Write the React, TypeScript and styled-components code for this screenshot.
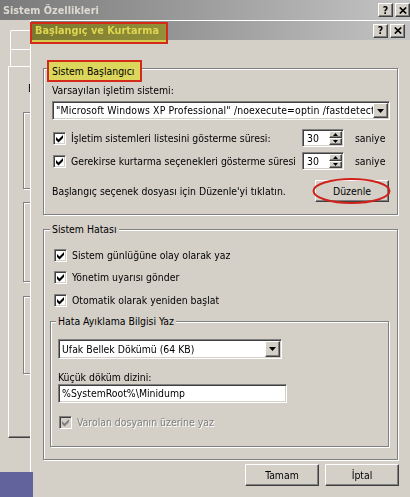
import React from 'react';
import styled, { createGlobalStyle, css } from 'styled-components';

const FONT = `"DejaVu Sans Condensed", "DejaVu Sans", "Liberation Sans", sans-serif`;

const GlobalStyle = createGlobalStyle`
  * { box-sizing: border-box; }
  html, body { margin: 0; padding: 0; }
  body {
    width: 410px;
    height: 497px;
    overflow: hidden;
    background: #62629c;
    font-family: ${FONT};
    font-size: 10.4px;
    line-height: 13px;
    color: #000;
  }
`;

const sunken = css`
  border: 1px solid;
  border-color: #808080 #ffffff #ffffff #808080;
  box-shadow: inset 1px 1px 0 #404040, inset -1px -1px 0 #d4d0c8;
`;

const raised = css`
  background: #d4d0c8;
  border: 1px solid;
  border-color: #ffffff #404040 #404040 #ffffff;
  box-shadow: inset -1px -1px 0 #808080;
`;

const Screen = styled.div`
  position: relative;
  width: 410px;
  height: 497px;
  overflow: hidden;
`;

const Window = styled.div<{ $left: number; $top: number; $width: number; $height: number; $framed?: boolean }>`
  position: absolute;
  left: ${p => p.$left}px;
  top: ${p => p.$top}px;
  width: ${p => p.$width}px;
  height: ${p => p.$height}px;
  background: #d4d0c8;
  display: flex;
  flex-direction: column;
  ${p => p.$framed && css`
    border-left: 1px solid #ffffff;
    border-top: 1px solid #ffffff;
  `}
`;

const TitleBar = styled.div<{ $h: number; $pl: number; $pr: number }>`
  flex: none;
  height: ${p => p.$h}px;
  display: flex;
  align-items: center;
  justify-content: space-between;
  padding: 0 ${p => p.$pr}px 0 ${p => p.$pl}px;
  background: linear-gradient(90deg, #7a7a7a 0%, #9a9a9a 45%, #c4c4c4 100%);
`;

const TitleText = styled.span`
  font-weight: bold;
  color: #dedad2;
  font-size: 10.8px;
  white-space: nowrap;
`;

const CaptionButtons = styled.div`
  display: flex;
  gap: 2px;
`;

const CaptionButton = styled.div`
  ${raised};
  width: 15px;
  height: 14px;
  display: flex;
  align-items: center;
  justify-content: center;
  font-weight: bold;
  font-size: 10.5px;
  line-height: 1;
  color: #000;
`;

const DesktopPatch = styled.div`
  position: absolute;
  left: 0;
  top: 472px;
  width: 33px;
  height: 25px;
  background: #62629c;
  z-index: 3;
`;

/* ---------- back window (Sistem Özellikleri) ---------- */

const BackBody = styled.div`
  flex: 1;
  display: flex;
  flex-direction: column;
  padding: 10px 0 0 8px;
`;

const TabRow = styled.div<{ $h: number }>`
  display: flex;
  height: ${p => p.$h}px;
  padding-left: 2px;
`;

const Tab = styled.div<{ $w: number }>`
  width: ${p => p.$w}px;
  border-left: 1px solid #ffffff;
  border-top: 1px solid #ffffff;
  border-right: 1px solid #404040;
  box-shadow: inset -1px 0 0 #808080;
  border-radius: 2px 2px 0 0;
`;

const TabPanel = styled.div`
  width: 396px;
  height: 372px;
  border: 1px solid;
  border-color: #ffffff #404040 #404040 #ffffff;
  box-shadow: inset -1px -1px 0 #808080;
  padding: 15px 0 0 14px;
  display: flex;
  flex-direction: column;
`;

const BackNote = styled.div`
  margin-left: 5px;
  white-space: nowrap;
`;

/* ---------- shared controls ---------- */

const Group = styled.div<{ $pad: string; $mt?: number; $h?: number; $w?: number; $stretch?: boolean }>`
  position: relative;
  flex: none;
  margin-top: ${p => p.$mt ?? 0}px;
  ${p => p.$h && css`height: ${p.$h}px;`}
  ${p => p.$w && css`width: ${p.$w}px;`}
  ${p => p.$stretch && css`align-self: stretch;`}
  padding: ${p => p.$pad};
  border: 1px solid #808080;
  box-shadow: 1px 1px 0 #ffffff, inset 1px 1px 0 #ffffff;
  display: flex;
  flex-direction: column;
  align-items: flex-start;
`;

const Legend = styled.span<{ $left: number }>`
  position: absolute;
  top: -7px;
  left: ${p => p.$left}px;
  padding: 0 2px;
  background: #d4d0c8;
  white-space: nowrap;
`;

const MarkedLegend = styled.span`
  position: absolute;
  top: -9px;
  left: 3px;
  width: 95px;
  height: 22px;
  padding-left: 3px;
  display: flex;
  align-items: center;
  background: #dcd65c;
  border: 2px solid #d42a1a;
  white-space: nowrap;
`;

const TitleHighlight = styled.div`
  position: absolute;
  left: -1px;
  top: 1px;
  width: 138px;
  height: 22px;
  border: 2px solid #d42a1a;
  pointer-events: none;
`;

const HighlightFill = styled.div`
  width: 100%;
  height: 100%;
  background: #fffa62;
  mix-blend-mode: multiply;
`;

const FieldLabel = styled.div<{ $mt?: number }>`
  margin-top: ${p => p.$mt ?? 0}px;
  white-space: nowrap;
`;

const Combo = styled.div<{ $w: number; $h: number; $mt?: number }>`
  ${sunken};
  width: ${p => p.$w}px;
  height: ${p => p.$h}px;
  margin-top: ${p => p.$mt ?? 0}px;
  background: #ffffff;
  display: flex;
  align-items: center;
  padding: 1px 1px 1px 3px;
`;

const ComboText = styled.span<{ $spacing?: number }>`
  flex: 1;
  min-width: 0;
  overflow: hidden;
  white-space: nowrap;
  letter-spacing: ${p => p.$spacing ?? 0}px;
`;

const ComboButton = styled.span`
  ${raised};
  flex: none;
  width: 15px;
  height: 100%;
  display: flex;
  align-items: center;
  justify-content: center;
`;

const TextField = styled.div<{ $w: number; $h: number }>`
  ${sunken};
  width: ${p => p.$w}px;
  height: ${p => p.$h}px;
  background: #ffffff;
  display: flex;
  align-items: center;
  padding-left: 3px;
  white-space: nowrap;
`;

const OptionRow = styled.div<{ $mt: number }>`
  align-self: stretch;
  margin-top: ${p => p.$mt}px;
  height: 18px;
  display: flex;
  align-items: center;
`;

const CheckLine = styled.div<{ $mt?: number; $disabled?: boolean; $grow?: boolean }>`
  display: flex;
  align-items: center;
  gap: 5px;
  height: 14px;
  margin-top: ${p => p.$mt ?? 0}px;
  padding-left: 1px;
  white-space: nowrap;
  ${p => p.$grow && css`flex: 1; min-width: 0;`}
  ${p => p.$disabled && css`
    color: #808080;
    text-shadow: 1px 1px 0 #ffffff;
  `}
`;

const CheckBox = styled.span<{ $disabled?: boolean }>`
  ${sunken};
  flex: none;
  width: 13px;
  height: 13px;
  padding: 1px;
  background: ${p => (p.$disabled ? '#d4d0c8' : '#ffffff')};
  display: flex;
`;

const CheckList = styled.div`
  display: flex;
  flex-direction: column;
  gap: 8.5px;
  padding-left: 3px;
`;

const Spin = styled.div`
  ${sunken};
  flex: none;
  width: 42px;
  height: 18px;
  padding: 1px;
  background: #ffffff;
  display: flex;
`;

const SpinValue = styled.span`
  flex: 1;
  padding-left: 3px;
  display: flex;
  align-items: center;
`;

const SpinButtons = styled.div`
  width: 13px;
  display: flex;
  flex-direction: column;
`;

const SpinButton = styled.span`
  ${raised};
  flex: 1;
  display: flex;
  align-items: center;
  justify-content: center;
`;

const Unit = styled.span`
  flex: none;
  width: 35px;
  margin-left: 11px;
  white-space: nowrap;
`;

const EditRow = styled.div`
  align-self: stretch;
  margin-top: 10px;
  height: 22px;
  display: flex;
  align-items: center;
  justify-content: space-between;
  white-space: nowrap;
`;

const ButtonWrap = styled.div`
  position: relative;
  margin-right: 1px;
`;

const PushButton = styled.button<{ $w: number }>`
  ${raised};
  width: ${p => p.$w}px;
  height: 22px;
  padding: 0;
  font-family: ${FONT};
  font-size: 10.4px;
  color: #000;
  display: block;
`;

const CircleMark = styled.svg`
  position: absolute;
  left: -4px;
  top: -3px;
  pointer-events: none;
  overflow: visible;
`;

const DialogBody = styled.div`
  flex: 1;
  display: flex;
  flex-direction: column;
  padding: 28px 12px 0;
`;

const ButtonBar = styled.div`
  display: flex;
  justify-content: flex-end;
  gap: 6px;
  margin-top: 4px;
  margin-right: -1px;
`;

/* ---------- small drawings ---------- */

const Check = ({ disabled }: { disabled?: boolean }) => (
  <CheckBox $disabled={disabled}>
    <svg width="9" height="9" viewBox="0 0 9 9">
      <path d="M1 3 L3.5 5.5 L8 1 L8 4 L3.5 8.5 L1 6 Z" fill={disabled ? '#808080' : '#000'} />
    </svg>
  </CheckBox>
);

const DownArrow = () => (
  <svg width="7" height="4" viewBox="0 0 7 4">
    <path d="M0 0 H7 L3.5 4 Z" fill="#000" />
  </svg>
);

const SmallArrow = ({ up }: { up?: boolean }) => (
  <svg width="5" height="3" viewBox="0 0 5 3">
    <path d={up ? 'M0 3 H5 L2.5 0 Z' : 'M0 0 H5 L2.5 3 Z'} fill="#000" />
  </svg>
);

const CloseGlyph = () => (
  <svg width="8" height="7" viewBox="0 0 8 7">
    <path d="M0.8 0.5 L7.2 6.5 M7.2 0.5 L0.8 6.5" stroke="#000" strokeWidth="1.7" />
  </svg>
);

const Captions = () => (
  <CaptionButtons>
    <CaptionButton>?</CaptionButton>
    <CaptionButton>
      <CloseGlyph />
    </CaptionButton>
  </CaptionButtons>
);

const SpinBox = ({ value }: { value: string }) => (
  <Spin>
    <SpinValue>{value}</SpinValue>
    <SpinButtons>
      <SpinButton>
        <SmallArrow up />
      </SpinButton>
      <SpinButton>
        <SmallArrow />
      </SpinButton>
    </SpinButtons>
  </Spin>
);

export default function App() {
  return (
    <Screen>
      <GlobalStyle />

      <Window $left={0} $top={0} $width={410} $height={472}>
        <TitleBar $h={20} $pl={3} $pr={0}>
          <TitleText>Sistem Özellikleri</TitleText>
          <Captions />
        </TitleBar>
        <BackBody>
          <TabRow $h={19}>
            <Tab $w={110} />
            <Tab $w={140} />
            <Tab $w={40} />
          </TabRow>
          <TabRow $h={17}>
            <Tab $w={50} />
            <Tab $w={90} />
            <Tab $w={60} />
            <Tab $w={60} />
          </TabRow>
          <TabPanel>
            <BackNote>Bu</BackNote>
            <Group $pad="0" $mt={17} $h={77} $w={360} />
            <Group $pad="0" $mt={13} $h={80} $w={360} />
            <Group $pad="0" $mt={14} $h={78} $w={360} />
          </TabPanel>
        </BackBody>
      </Window>

      <Window $left={30} $top={20} $width={380} $height={477} $framed>
        <TitleBar $h={19} $pl={4} $pr={5}>
          <TitleText>Başlangıç ve Kurtarma</TitleText>
          <Captions />
        </TitleBar>
        <TitleHighlight>
          <HighlightFill />
        </TitleHighlight>

        <DialogBody>
          <Group $pad="15px 7px 12px 8px">
            <MarkedLegend>Sistem Başlangıcı</MarkedLegend>
            <FieldLabel>Varsayılan işletim sistemi:</FieldLabel>
            <Combo $w={338} $h={19} $mt={4}>
              <ComboText $spacing={0.14}>"Microsoft Windows XP Professional" /noexecute=optin /fastdetect</ComboText>
              <ComboButton>
                <DownArrow />
              </ComboButton>
            </Combo>
            <OptionRow $mt={9}>
              <CheckLine $grow>
                <Check />
                <span>İşletim sistemleri listesini gösterme süresi:</span>
              </CheckLine>
              <SpinBox value="30" />
              <Unit>saniye</Unit>
            </OptionRow>
            <OptionRow $mt={5}>
              <CheckLine $grow>
                <Check />
                <span>Gerekirse kurtarma seçenekleri gösterme süresi</span>
              </CheckLine>
              <SpinBox value="30" />
              <Unit>saniye</Unit>
            </OptionRow>
            <EditRow>
              <span>Başlangıç seçenek dosyası için Düzenle'yi tıklatın.</span>
              <ButtonWrap>
                <PushButton $w={74}>Düzenle</PushButton>
                <CircleMark width="82" height="30" viewBox="0 0 82 30">
                  <ellipse cx="40.5" cy="14" rx="38" ry="12" fill="none" stroke="#d0221c" strokeWidth="2" />
                </CircleMark>
              </ButtonWrap>
            </EditRow>
          </Group>

          <Group $pad="18px 8px 12px 6px" $mt={14}>
            <Legend $left={6}>Sistem Hatası</Legend>
            <CheckList>
              <CheckLine>
                <Check />
                <span>Sistem günlüğüne olay olarak yaz</span>
              </CheckLine>
              <CheckLine>
                <Check />
                <span>Yönetim uyarısı gönder</span>
              </CheckLine>
              <CheckLine>
                <Check />
                <span>Otomatik olarak yeniden başlat</span>
              </CheckLine>
            </CheckList>

            <Group $pad="17px 7px 17px 7px" $mt={14} $stretch>
              <Legend $left={5}>Hata Ayıklama Bilgisi Yaz</Legend>
              <Combo $w={224} $h={20}>
                <ComboText>Ufak Bellek Dökümü (64 KB)</ComboText>
                <ComboButton>
                  <DownArrow />
                </ComboButton>
              </Combo>
              <FieldLabel $mt={12}>Küçük döküm dizini:</FieldLabel>
              <TextField $w={229} $h={19}>%SystemRoot%\Minidump</TextField>
              <CheckLine $mt={12} $disabled>
                <Check disabled />
                <span>Varolan dosyanın üzerine yaz</span>
              </CheckLine>
            </Group>
          </Group>

          <ButtonBar>
            <PushButton $w={74}>Tamam</PushButton>
            <PushButton $w={74}>İptal</PushButton>
          </ButtonBar>
        </DialogBody>
      </Window>

      <DesktopPatch />
    </Screen>
  );
}
